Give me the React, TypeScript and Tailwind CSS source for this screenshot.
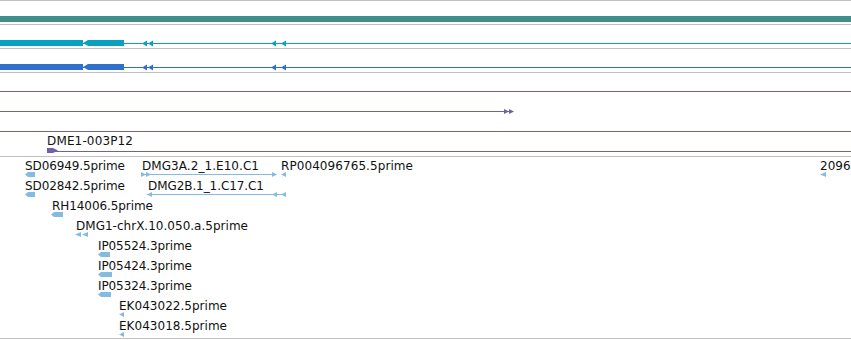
import * as React from "react";

// colours read off the track glyphs
const TEAL = "#408f8f";
const CYAN = "#0aa0c0";
const BLUE = "#3070cc";
const PURPLE = "#7060a8";
const FEAT = "#84bbe0";

// left / right pointing arrowheads, tip at x
function leftHead(x: number, cy: number, w = 5, h = 5) {
  return `${x},${cy} ${x + w},${cy - h / 2} ${x + w},${cy + h / 2}`;
}
function rightHead(x: number, cy: number, w = 5, h = 5) {
  return `${x},${cy} ${x - w},${cy - h / 2} ${x - w},${cy + h / 2}`;
}
// block with a pointed left end
function leftBlock(x0: number, x1: number, cy: number, h = 5) {
  return `${x0},${cy} ${x0 + 3},${cy - h / 2} ${x1},${cy - h / 2} ${x1},${cy + h / 2} ${x0 + 3},${cy + h / 2}`;
}

type Label = { t: string; x: number; row: number; w?: number };

const LABELS: Label[] = [
  { t: "SD06949.5prime", x: 25, row: 0, w: 100 },
  { t: "DMG3A.2_1.E10.C1", x: 142, row: 0, w: 117 },
  { t: "RP004096765.5prime", x: 281, row: 0, w: 132 },
  { t: "2096", x: 820, row: 0 },
  { t: "SD02842.5prime", x: 25, row: 1, w: 100 },
  { t: "DMG2B.1_1.C17.C1", x: 148, row: 1, w: 116 },
  { t: "RH14006.5prime", x: 52, row: 2, w: 101 },
  { t: "DMG1-chrX.10.050.a.5prime", x: 76, row: 3, w: 172 },
  { t: "IP05524.3prime", x: 98, row: 4, w: 94 },
  { t: "IP05424.3prime", x: 98, row: 5, w: 94 },
  { t: "IP05324.3prime", x: 98, row: 6, w: 94 },
  { t: "EK043022.5prime", x: 119, row: 7, w: 108 },
  { t: "EK043018.5prime", x: 119, row: 8, w: 108 },
];

const BLOCKS: { x0: number; x1: number; row: number }[] = [
  { x0: 25, x1: 35, row: 0 },
  { x0: 25, x1: 35, row: 1 },
  { x0: 51, x1: 63, row: 2 },
  { x0: 98, x1: 110, row: 4 },
  { x0: 98, x1: 112, row: 5 },
  { x0: 98, x1: 111, row: 6 },
];

const rowY = (r: number) => 174.5 + r * 20;

// top = page y of the track's upper border
function GeneTrack({ color, top }: { color: string; top: number }) {
  const cy = top + 19;
  return (
    <svg width={851} height={23} viewBox={`0 ${top + 1} 851 23`} className="block">
      <rect x={0} y={cy} width={851} height={1} fill={color} shapeRendering="crispEdges" />
      <rect x={0} y={cy - 3} width={83} height={6} fill={color} shapeRendering="crispEdges" />
      <polygon points={`83,${cy} 88,${cy - 3} 88,${cy + 3}`} fill={color} />
      <rect x={88} y={cy - 3} width={36} height={6} fill={color} shapeRendering="crispEdges" />
      {[142, 148, 271, 281].map((x) => (
        <polygon key={x} points={leftHead(x, cy + 0.5, 5, 6)} fill={color} />
      ))}
    </svg>
  );
}

export default function App() {
  return (
    <div
      className="h-[340px] w-[851px] overflow-hidden bg-white text-black"
      style={{ fontFamily: '"DejaVu Sans", "Liberation Sans", sans-serif' }}
    >
      {/* track 1: full-width block */}
      <div className="h-[24px] border-t border-[#c0c0c0]">
        <svg width={851} height={23} viewBox="0 1 851 23" className="block">
          <rect x={0} y={16} width={851} height={6} fill={TEAL} shapeRendering="crispEdges" />
        </svg>
      </div>

      <div className="h-[24px] border-t border-[#c0c0c0]">
        <GeneTrack color={CYAN} top={24} />
      </div>
      <div className="h-[24px] border-t border-[#c0c0c0]">
        <GeneTrack color={BLUE} top={48} />
      </div>

      {/* purple track */}
      <div className="h-[84px] border-t border-[#c0c0c0]">
        <svg width={851} height={83} viewBox="0 73 851 83" className="block">
          <g shapeRendering="crispEdges" fill={PURPLE}>
            <rect x={0} y={91} width={851} height={1} />
            <rect x={0} y={111} width={510} height={1} />
            <rect x={0} y={131} width={851} height={1} />
            <rect x={47} y={151} width={804} height={1} />
            <rect x={47} y={148} width={6} height={5} />
          </g>
          <polygon points={rightHead(509, 111.5)} fill={PURPLE} />
          <polygon points={rightHead(514, 111.5)} fill={PURPLE} />
          <polygon points="53,148 58,150.5 53,153" fill={PURPLE} />
          <text x={47} y={145} fontSize={12} fill="#111" textLength={86} lengthAdjust="spacing">
            DME1-003P12
          </text>
        </svg>
      </div>

      {/* feature track */}
      <div className="h-[183px] border-y border-[#c0c0c0]">
        <svg width={851} height={182} viewBox="0 157 851 182" className="block">
          {LABELS.map((l) => (
            <text
              key={l.t}
              x={l.x}
              y={169.5 + l.row * 20}
              fontSize={12}
              fill="#111"
              textLength={l.w}
              lengthAdjust={l.w ? "spacing" : undefined}
            >
              {l.t}
            </text>
          ))}
          {BLOCKS.map((b, i) => (
            <polygon key={i} points={leftBlock(b.x0, b.x1, rowY(b.row))} fill={FEAT} />
          ))}

          {/* DMG3A: forward pair */}
          <rect x={142} y={rowY(0) - 0.5} width={134} height={1} fill={FEAT} shapeRendering="crispEdges" />
          <polygon points={rightHead(146, rowY(0))} fill={FEAT} />
          <polygon points={rightHead(151, rowY(0))} fill={FEAT} />
          <polygon points={rightHead(277, rowY(0))} fill={FEAT} />
          <polygon points={leftHead(281, rowY(0))} fill={FEAT} />
          <polygon points={leftHead(820, rowY(0), 6)} fill={FEAT} />

          {/* DMG2B: reverse pair */}
          <rect x={147} y={rowY(1) - 0.5} width={139} height={1} fill={FEAT} shapeRendering="crispEdges" />
          <polygon points={leftHead(147, rowY(1))} fill={FEAT} />
          <polygon points={leftHead(272, rowY(1))} fill={FEAT} />
          <polygon points={leftHead(281, rowY(1))} fill={FEAT} />

          {/* DMG1 */}
          <polygon points={leftHead(75, rowY(3), 6)} fill={FEAT} />
          <polygon points={leftHead(82, rowY(3), 6)} fill={FEAT} />

          {/* EK small ones */}
          <polygon points={leftHead(119, rowY(7))} fill={FEAT} />
          <polygon points={leftHead(119, rowY(8))} fill={FEAT} />
        </svg>
      </div>
    </div>
  );
}
